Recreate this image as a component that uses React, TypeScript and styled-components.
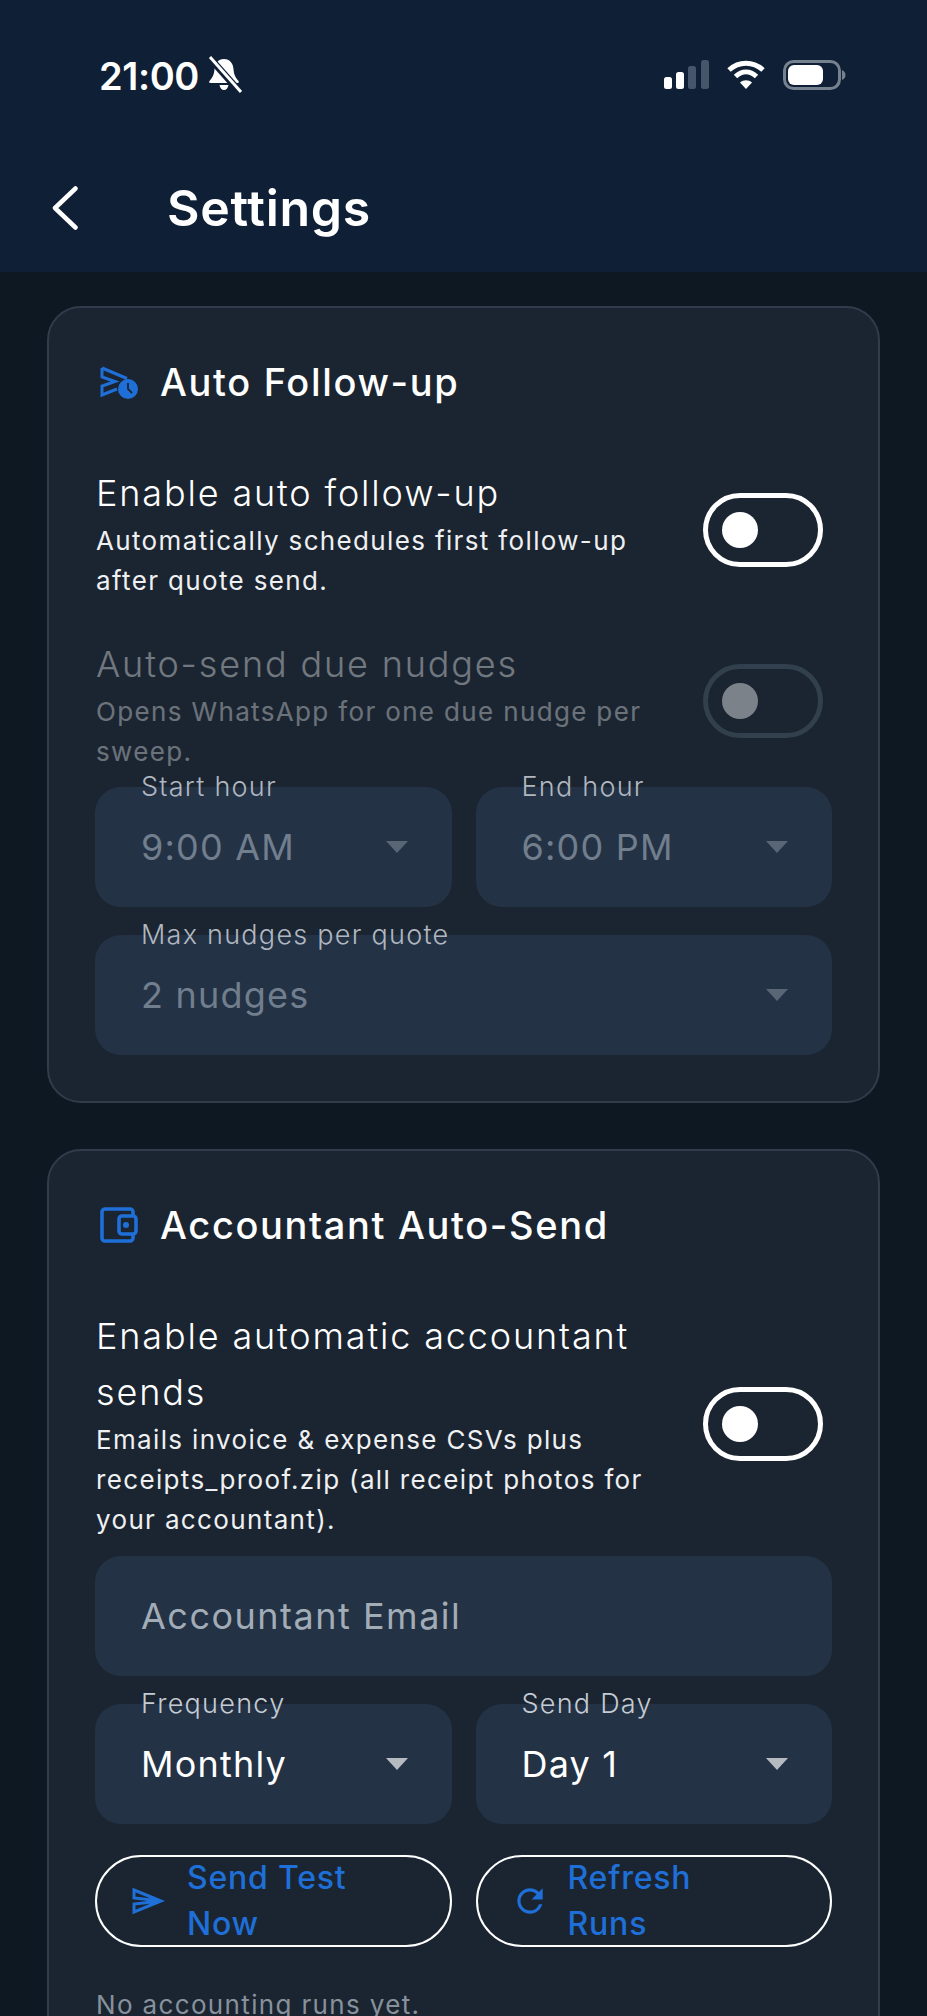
import React from 'react';
import styled, { createGlobalStyle } from 'styled-components';
import { MdRefresh } from 'react-icons/md';

const GlobalStyle = createGlobalStyle`
  html, body {
    margin: 0;
    padding: 0;
    background: #0e1822;
  }
  * {
    box-sizing: border-box;
  }
`;

const Screen = styled.div`
  width: 927px;
  height: 2016px;
  overflow: hidden;
  background: #0e1822;
  font-family: Inter, 'Liberation Sans', sans-serif;
  color: #fff;
`;

const Header = styled.header`
  height: 272px;
  background: #0f1f35;
`;

const StatusBar = styled.div`
  height: 174px;
  padding: 55px 0 0 99px;
  display: flex;
  align-items: flex-start;
`;

const Clock = styled.span`
  font-size: 38px;
  line-height: 42px;
  font-weight: 600;
  letter-spacing: -0.4px;
  width: 106px;
`;

const StatusIcons = styled.div`
  margin-left: auto;
  margin-right: 81px;
  display: flex;
  align-items: flex-start;
  gap: 18px;
  padding-top: 5px;
`;

const NavBar = styled.div`
  height: 68px;
  padding-left: 52px;
  display: flex;
  align-items: center;
`;

const PageTitle = styled.h1`
  margin: 0 0 0 89px;
  font-size: 50px;
  line-height: 68px;
  font-weight: 600;
  letter-spacing: 0.7px;
`;

const Content = styled.main`
  padding: 34px 47px 0;
  display: flex;
  flex-direction: column;
  gap: 46px;
`;

const Card = styled.section`
  background: #1b2531;
  border: 2px solid #303c4b;
  border-radius: 34px;
  padding: 50px 46px 46px;
`;

const CardHeader = styled.div`
  display: flex;
  align-items: center;
  height: 48px;
  margin-bottom: 59px;
  padding-left: 5px;
`;

const CardTitle = styled.h2`
  margin: 0 0 0 22px;
  font-size: 38px;
  line-height: 48px;
  font-weight: 500;
  letter-spacing: 1.65px;
`;

const SettingRow = styled.div<{ $gap?: number }>`
  display: flex;
  align-items: center;
  margin-bottom: ${({ $gap }) => $gap ?? 0}px;
  padding: 0 9px 0 1px;
`;

const SettingText = styled.div<{ $dimmed?: boolean }>`
  flex: 1;
  margin-right: 24px;
  opacity: ${({ $dimmed }) => ($dimmed ? 0.38 : 1)};
`;

const SettingTitle = styled.div`
  font-size: 36px;
  line-height: 56px;
  font-weight: 300;
  letter-spacing: 1.85px;
`;

const SettingHint = styled.div`
  font-size: 26px;
  line-height: 40px;
  letter-spacing: 1.35px;
  color: #eef0f2;
`;

const Toggle = styled.div<{ $lift?: boolean; $disabled?: boolean }>`
  width: 120px;
  height: 74px;
  border: 5px solid ${({ $disabled }) => ($disabled ? '#323f4d' : '#fff')};
  border-radius: 37px;
  padding-left: 14px;
  display: flex;
  align-items: center;
  flex-shrink: 0;
  margin-bottom: ${({ $lift }) => ($lift ? 6 : 0)}px;

  &::before {
    content: '';
    width: 36px;
    height: 36px;
    border-radius: 50%;
    background: ${({ $disabled }) => ($disabled ? '#7b828a' : '#fff')};
  }
`;

const FieldGrid = styled.div<{ $top?: number; $bottom?: number }>`
  display: grid;
  grid-template-columns: 1fr 1fr;
  gap: 28px 24px;
  margin-top: ${({ $top }) => $top ?? 0}px;
  margin-bottom: ${({ $bottom }) => $bottom ?? 0}px;
`;

const Field = styled.div<{ $wide?: boolean }>`
  position: relative;
  grid-column: ${({ $wide }) => ($wide ? '1 / -1' : 'auto')};
  height: 120px;
  background: #243245;
  border-radius: 26px;
  padding: 0 44px 0 46px;
  display: flex;
  align-items: center;
  justify-content: space-between;
`;

const FieldLabel = styled.span<{ $dimmed?: boolean }>`
  position: absolute;
  left: 46px;
  top: -18px;
  font-size: 27px;
  line-height: 36px;
  font-weight: 300;
  letter-spacing: 1.25px;
  color: ${({ $dimmed }) => ($dimmed ? '#b0b7c0' : '#c4cbd4')};
`;

const FieldValue = styled.span<{ $tone: 'on' | 'off' | 'placeholder' }>`
  font-size: 36px;
  line-height: 44px;
  letter-spacing: ${({ $tone }) => ($tone === 'placeholder' ? 1.5 : 1.2)}px;
  color: ${({ $tone }) =>
    $tone === 'on' ? '#ffffff' : $tone === 'off' ? '#717e8d' : '#a2acb7'};
`;

const Caret = styled.span<{ $dimmed?: boolean }>`
  width: 0;
  height: 0;
  border-left: 11px solid transparent;
  border-right: 11px solid transparent;
  border-top: 12px solid ${({ $dimmed }) => ($dimmed ? '#586676' : '#b6bbc2')};
`;

const ActionButton = styled.button`
  height: 92px;
  background: transparent;
  border: 2.5px solid #fff;
  border-radius: 46px;
  padding: 0 0 0 35px;
  display: flex;
  align-items: center;
  gap: 21px;
  font-family: inherit;
  font-size: 32px;
  line-height: 46px;
  font-weight: 500;
  letter-spacing: 0.8px;
  text-align: left;
  color: #1f6fd8;

  svg {
    flex-shrink: 0;
  }
`;

const ButtonLabel = styled.span`
  max-width: 200px;
`;

const RefreshGlyph = styled(MdRefresh)`
  width: 38px;
  height: 38px;
  margin: 0 -2px 0 -2px;
  color: #1f6fd8;
`;

const EmptyNote = styled.p`
  margin: 0;
  padding-left: 1px;
  font-size: 26px;
  line-height: 40px;
  letter-spacing: 1.35px;
  color: #87919c;
`;

const BLUE = '#1f6fd8';

const MutedBell = () => (
  <svg width="38" height="38" viewBox="0 0 38 38" fill="#fff">
    <path d="M19 4c-6 0-9 4.500-9.500 10-.4 5-1.500 8-5 12-.8 1-.3 2 1 2h27c1.300 0 1.800-1 1-2-3.500-4-4.600-7-5-12C28 8.500 25 4 19 4z" />
    <path d="M14.500 30h9c-.5 3-2.300 5-4.500 5s-4-2-4.500-5z" />
    <path d="M3 1l32 36" stroke="#0f1f35" strokeWidth="7" />
    <path d="M5 2l31 35" stroke="#fff" strokeWidth="3" />
  </svg>
);

const SignalIcon = () => (
  <svg width="45" height="29" viewBox="0 0 45 29">
    <rect x="0" y="17" width="8" height="12" rx="2.500" fill="#fff" />
    <rect x="12" y="12" width="8" height="17" rx="2.500" fill="#fff" />
    <rect x="24" y="6" width="8" height="23" rx="2.500" fill="#46566a" />
    <rect x="37" y="0" width="8" height="29" rx="2.500" fill="#46566a" />
  </svg>
);

const WifiIcon = () => (
  <svg width="38" height="29" viewBox="0 0 38 29" fill="none" stroke="#fff" strokeWidth="5">
    <path d="M2 10c10-9 24-9 34 0" />
    <path d="M8.500 16.500c6.500-6 14.500-6 21 0" />
    <path d="M19 29l-6-6.500c3.500-3 8.500-3 12 0z" fill="#fff" stroke="none" />
  </svg>
);

const BatteryIcon = () => (
  <svg width="63" height="30" viewBox="0 0 63 30">
    <rect x="1.500" y="1.500" width="55" height="27" rx="9" fill="none" stroke="#75818f" strokeWidth="3" />
    <rect x="5" y="5" width="35" height="20" rx="6" fill="#fff" />
    <path d="M59 10c2.500 1 3.500 3 3.500 5s-1 4-3.500 5z" fill="#75818f" />
  </svg>
);

const BackChevron = () => (
  <svg width="26" height="44" viewBox="0 0 26 44" fill="none" stroke="#fff" strokeWidth="4.500" strokeLinecap="round" strokeLinejoin="round">
    <path d="M23.500 2.500L3 22l20.500 19.500" />
  </svg>
);

const SendClockIcon = () => (
  <svg width="38" height="34" viewBox="0 0 38 34" fill="none">
    <path d="M2 3v9l13 4.500L2 21v9l15-6M2 3l25 10.500" stroke={BLUE} strokeWidth="3" />
    <circle cx="28" cy="24" r="10" fill={BLUE} />
    <path d="M28 18v6l4 4" stroke="#1b2531" strokeWidth="1.800" />
  </svg>
);

const WalletIcon = () => (
  <svg width="38" height="36" viewBox="0 0 38 36" fill="none" stroke={BLUE} strokeWidth="3.600">
    <path d="M33 9V5c0-2-1.500-3-3-3H5C3 2 2 3.500 2 5v26c0 1.500 1 3 3 3h25c1.500 0 3-1 3-3v-4" />
    <rect x="19" y="9" width="17" height="18" rx="3" />
    <circle cx="26" cy="18" r="3" fill={BLUE} stroke="none" />
  </svg>
);

const PlaneIcon = () => (
  <svg width="34" height="28" viewBox="0 0 34 28" fill="none" stroke={BLUE} strokeWidth="3">
    <path d="M2 3l27 11L2 25v-8l27-3L2 11z" />
  </svg>
);

export default function App() {
  return (
    <Screen>
      <GlobalStyle />
      <Header>
        <StatusBar>
          <Clock>21:00</Clock>
          <MutedBell />
          <StatusIcons>
            <SignalIcon />
            <WifiIcon />
            <BatteryIcon />
          </StatusIcons>
        </StatusBar>
        <NavBar>
          <BackChevron />
          <PageTitle>Settings</PageTitle>
        </NavBar>
      </Header>
      <Content>
        <Card>
          <CardHeader>
            <SendClockIcon />
            <CardTitle>Auto Follow-up</CardTitle>
          </CardHeader>
          <SettingRow $gap={35}>
            <SettingText>
              <SettingTitle>Enable auto follow-up</SettingTitle>
              <SettingHint>
                Automatically schedules first follow-up after quote send.
              </SettingHint>
            </SettingText>
            <Toggle $lift />
          </SettingRow>
          <SettingRow>
            <SettingText $dimmed>
              <SettingTitle>Auto-send due nudges</SettingTitle>
              <SettingHint>Opens WhatsApp for one due nudge per sweep.</SettingHint>
            </SettingText>
            <Toggle $lift $disabled />
          </SettingRow>
          <FieldGrid $top={15}>
            <Field>
              <FieldLabel $dimmed>Start hour</FieldLabel>
              <FieldValue $tone="off">9:00 AM</FieldValue>
              <Caret $dimmed />
            </Field>
            <Field>
              <FieldLabel $dimmed>End hour</FieldLabel>
              <FieldValue $tone="off">6:00 PM</FieldValue>
              <Caret $dimmed />
            </Field>
            <Field $wide>
              <FieldLabel $dimmed>Max nudges per quote</FieldLabel>
              <FieldValue $tone="off">2 nudges</FieldValue>
              <Caret $dimmed />
            </Field>
          </FieldGrid>
        </Card>
        <Card>
          <CardHeader>
            <WalletIcon />
            <CardTitle>Accountant Auto-Send</CardTitle>
          </CardHeader>
          <SettingRow>
            <SettingText>
              <SettingTitle>Enable automatic accountant sends</SettingTitle>
              <SettingHint>
                Emails invoice &amp; expense CSVs plus receipts_proof.zip (all
                receipt photos for your accountant).
              </SettingHint>
            </SettingText>
            <Toggle />
          </SettingRow>
          <FieldGrid $top={16} $bottom={31}>
            <Field $wide>
              <FieldValue $tone="placeholder">Accountant Email</FieldValue>
            </Field>
            <Field>
              <FieldLabel>Frequency</FieldLabel>
              <FieldValue $tone="on">Monthly</FieldValue>
              <Caret />
            </Field>
            <Field>
              <FieldLabel>Send Day</FieldLabel>
              <FieldValue $tone="on">Day 1</FieldValue>
              <Caret />
            </Field>
          </FieldGrid>
          <FieldGrid $bottom={38}>
            <ActionButton>
              <PlaneIcon />
              <ButtonLabel>Send Test Now</ButtonLabel>
            </ActionButton>
            <ActionButton>
              <RefreshGlyph />
              <ButtonLabel>Refresh Runs</ButtonLabel>
            </ActionButton>
          </FieldGrid>
          <EmptyNote>No accounting runs yet.</EmptyNote>
        </Card>
      </Content>
    </Screen>
  );
}
